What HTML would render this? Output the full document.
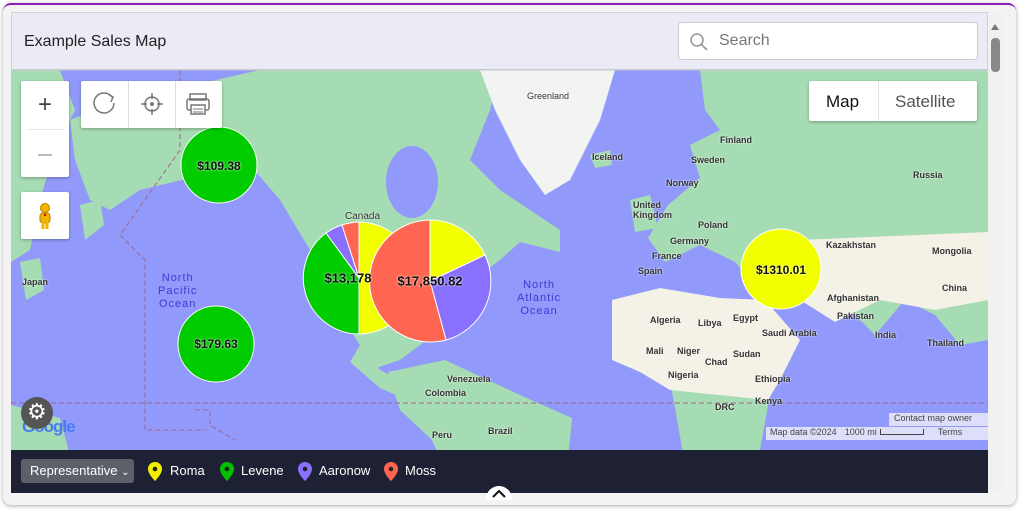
<!DOCTYPE html>
<html><head><meta charset="utf-8"><style>
*{margin:0;padding:0;box-sizing:border-box}
body{width:1024px;height:511px;background:#fff;font-family:"Liberation Sans",Arial,sans-serif;position:relative;overflow:hidden}
.card{position:absolute;left:3px;top:3px;width:1013px;height:502px;border-radius:8px;background:#f3f3f3;box-shadow:0 1px 4px rgba(0,0,0,.35);border-top:2px solid #8a1fb8;overflow:hidden}
.abs{position:absolute}
.header{left:11px;top:12px;width:977px;height:58px;background:#ebebf5;border:1px solid #d0d0d8;border-bottom:1px solid #c8c8d0}
.title{left:12px;top:20px;font-size:16px;color:#222}
.search{left:666px;top:9px;width:300px;height:38px;background:#fff;border:1px solid #ccc;border-radius:4px}
.search span{position:absolute;left:40px;top:9px;font-size:16px;color:#777}
.btn{background:#fff;box-shadow:0 1px 3px rgba(0,0,0,.3);border-radius:2px}
.lbl{position:absolute;font-size:11px;color:#333;font-weight:bold;text-shadow:0 0 2px #fff}
.pv{position:absolute;font-size:12px;font-weight:bold;color:#111;transform:translate(-50%,-50%);text-shadow:0 0 2px #fff}
</style></head><body>
<div class="card"></div>
<svg class="abs" style="left:0;top:0" width="1024" height="511">
<defs><clipPath id="c"><rect x="11" y="70" width="977" height="423"/></clipPath></defs>
<g clip-path="url(#c)">
<rect x="11" y="70" width="977" height="423" fill="#9199fb"/>
<g fill="#a6dcb3">
<polygon points="11,70 60,70 75,110 55,150 40,200 30,250 11,262"/>
<polygon points="20,262 40,258 44,290 26,300"/>
<polygon points="80,205 100,200 104,225 85,240"/>
<polygon points="70,120 120,100 180,88 260,70 500,70 490,110 470,160 500,190 530,210 560,230 560,252 520,242 500,260 480,275 470,300 440,330 420,345 400,360 370,370 360,345 330,300 310,250 280,200 250,165 230,145 190,178 140,190 110,210 90,200 75,160"/>
<polygon points="360,345 380,370 420,390 445,400 425,408 380,388 350,362"/>
<polygon points="700,70 988,70 988,340 960,345 935,315 905,300 875,335 845,305 810,300 790,290 760,290 735,262 700,245 665,262 648,238 668,205 700,178 690,145 720,130 705,110"/>
<polygon points="630,200 650,195 658,228 635,232"/>
<polygon points="590,155 610,150 612,165 595,168"/>
<polygon points="388,372 445,360 520,395 572,418 565,493 455,493 432,440 400,410"/>
<polygon points="11,405 60,418 80,493 11,493"/>
<polygon points="670,380 770,395 760,450 725,493 690,493"/>
</g>
<ellipse cx="412" cy="182" rx="26" ry="36" fill="#9199fb"/>
<polygon points="480,70 615,70 600,120 570,180 545,195 520,160 495,110" fill="#f2f4f2"/>
<g fill="#f4f1e6">
<polygon points="612,300 660,288 720,298 765,300 800,340 780,380 768,400 670,390 640,372 612,360"/>
<polygon points="800,240 988,232 988,300 935,310 880,300 835,322 800,300"/>
</g>
<g stroke="#a0658a" stroke-dasharray="5,3" fill="none" stroke-width="1">
<line x1="11" y1="403" x2="988" y2="403"/>
<polyline points="180,70 180,150 120,235 145,260 145,430 205,430"/>
<polyline points="195,410 210,410 210,425 235,440"/>
</g>
</g>
<line x1="11" y1="70" x2="988" y2="70" stroke="#ccc"/>
<circle cx="219" cy="165" r="38" fill="#00cc00" stroke="#fff"/>
<circle cx="216" cy="344" r="38" fill="#00cc00" stroke="#fff"/>
<circle cx="781" cy="269" r="40" fill="#f2ff00" stroke="#fff"/>
<g stroke="#fff" stroke-width="1">
<path d="M359,278 L359,222 A56,56 0 0 1 359,334 Z" fill="#f2ff00"/>
<path d="M359,278 L359,334 A56,56 0 0 1 326,233 Z" fill="#00cc00"/>
<path d="M359,278 L326,233 A56,56 0 0 1 342,225 Z" fill="#8a70ff"/>
<path d="M359,278 L342,225 A56,56 0 0 1 359,222 Z" fill="#ff6652"/>
<path d="M430,281 L430,220 A61,61 0 0 1 485,255 Z" fill="#f2ff00"/>
<path d="M430,281 L485,255 A61,61 0 0 1 446,340 Z" fill="#8a70ff"/>
<path d="M430,281 L446,340 A61,61 0 1 1 430,220 Z" fill="#ff6652"/>
</g>
<rect x="988" y="12" width="15" height="481" fill="#f1f1f1"/>
<polygon points="991,30 999,30 995,24" fill="#777"/>
<rect x="991" y="38" width="9" height="34" rx="4" fill="#888"/>
</svg>
<div class="pv" style="left:219px;top:166px">$109.38</div>
<div class="pv" style="left:216px;top:344px">$179.63</div>
<div class="pv" style="left:781px;top:270px">$1310.01</div>
<div class="pv" style="left:348px;top:278px;font-size:13px">$13,178</div>
<div class="pv" style="left:430px;top:281px;font-size:13px">$17,850.82</div>
<div class="lbl" style="left:527px;top:91px;font-weight:normal;font-size:9px">Greenland</div>
<div class="lbl" style="left:345px;top:211px;font-weight:normal;font-size:10px">Canada</div>
<div class="lbl" style="left:720px;top:135px;font-size:9px">Finland</div>
<div class="lbl" style="left:592px;top:152px;font-size:9px">Iceland</div>
<div class="lbl" style="left:691px;top:155px;font-size:9px">Sweden</div>
<div class="lbl" style="left:666px;top:178px;font-size:9px">Norway</div>
<div class="lbl" style="left:633px;top:200px;font-size:9px;line-height:10px">United<br>Kingdom</div>
<div class="lbl" style="left:698px;top:220px;font-size:9px">Poland</div>
<div class="lbl" style="left:670px;top:236px;font-size:9px">Germany</div>
<div class="lbl" style="left:652px;top:251px;font-size:9px">France</div>
<div class="lbl" style="left:638px;top:266px;font-size:9px">Spain</div>
<div class="lbl" style="left:913px;top:170px;font-size:9px">Russia</div>
<div class="lbl" style="left:826px;top:240px;font-size:9px">Kazakhstan</div>
<div class="lbl" style="left:932px;top:246px;font-size:9px">Mongolia</div>
<div class="lbl" style="left:942px;top:283px;font-size:9px">China</div>
<div class="lbl" style="left:827px;top:293px;font-size:9px">Afghanistan</div>
<div class="lbl" style="left:837px;top:311px;font-size:9px">Pakistan</div>
<div class="lbl" style="left:927px;top:338px;font-size:9px">Thailand</div>
<div class="lbl" style="left:875px;top:330px;font-size:9px">India</div>
<div class="lbl" style="left:650px;top:315px;font-size:9px">Algeria</div>
<div class="lbl" style="left:698px;top:318px;font-size:9px">Libya</div>
<div class="lbl" style="left:733px;top:313px;font-size:9px">Egypt</div>
<div class="lbl" style="left:762px;top:328px;font-size:9px">Saudi Arabia</div>
<div class="lbl" style="left:646px;top:346px;font-size:9px">Mali</div>
<div class="lbl" style="left:677px;top:346px;font-size:9px">Niger</div>
<div class="lbl" style="left:733px;top:349px;font-size:9px">Sudan</div>
<div class="lbl" style="left:705px;top:357px;font-size:9px">Chad</div>
<div class="lbl" style="left:668px;top:370px;font-size:9px">Nigeria</div>
<div class="lbl" style="left:755px;top:374px;font-size:9px">Ethiopia</div>
<div class="lbl" style="left:715px;top:402px;font-size:9px">DRC</div>
<div class="lbl" style="left:755px;top:396px;font-size:9px">Kenya</div>
<div class="lbl" style="left:447px;top:374px;font-size:9px">Venezuela</div>
<div class="lbl" style="left:425px;top:388px;font-size:9px">Colombia</div>
<div class="lbl" style="left:432px;top:430px;font-size:9px">Peru</div>
<div class="lbl" style="left:488px;top:426px;font-size:9px">Brazil</div>
<div class="lbl" style="left:22px;top:277px;font-size:9px">Japan</div>
<div class="abs" style="left:158px;top:272px;color:#3b3bd0;font-size:11px;text-align:center;letter-spacing:1px;line-height:13px">North<br>Pacific<br>Ocean</div>
<div class="abs" style="left:517px;top:279px;color:#3b3bd0;font-size:11px;text-align:center;letter-spacing:1px;line-height:13px">North<br>Atlantic<br>Ocean</div>
<div class="header abs">
<div class="title abs">Example Sales Map</div>
<div class="search abs"><svg class="abs" style="left:10px;top:9px" width="20" height="20"><circle cx="8" cy="8" r="6" stroke="#999" stroke-width="1.6" fill="none"/><line x1="12.5" y1="12.5" x2="18" y2="18" stroke="#999" stroke-width="1.8"/></svg><span>Search</span></div>
</div>
<div class="btn abs" style="left:21px;top:81px;width:48px;height:96px"><div class="abs" style="left:0;top:0;width:48px;height:48px;text-align:center;line-height:48px;font-size:24px;color:#444">+</div><div class="abs" style="left:6px;top:48px;width:36px;height:1px;background:#e6e6e6"></div><div class="abs" style="left:17px;top:73px;width:14px;height:2px;background:#bbb"></div></div>
<div class="btn abs" style="left:21px;top:192px;width:48px;height:47px"><svg class="abs" style="left:15px;top:10px" width="18" height="28"><circle cx="9" cy="6" r="4.5" fill="#f2b400" stroke="#b58500"/><rect x="4" y="11" width="10" height="10" rx="3" fill="#f2b400" stroke="#b58500"/><rect x="5.5" y="19" width="3" height="8" fill="#f2b400"/><rect x="9.5" y="19" width="3" height="8" fill="#f2b400"/><circle cx="9" cy="13" r="1.2" fill="#d00"/></svg></div>
<div class="btn abs" style="left:81px;top:81px;width:141px;height:47px">
<div class="abs" style="left:47px;top:0;width:1px;height:47px;background:#ddd"></div><div class="abs" style="left:94px;top:0;width:1px;height:47px;background:#ddd"></div>
<svg class="abs" style="left:0;top:0" width="141" height="47"><path d="M31 16 A10 10 0 1 0 33 22" stroke="#777" stroke-width="1.5" fill="none"/><polyline points="27,13 32,16 30,21" stroke="#777" stroke-width="1.5" fill="none"/><circle cx="71" cy="23" r="7" stroke="#777" stroke-width="1.5" fill="none"/><circle cx="71" cy="23" r="2" fill="#777"/><path d="M71 12v6M71 28v6M60 23h6M76 23h6" stroke="#777" stroke-width="1.5"/><rect x="109" y="13" width="16" height="6" stroke="#777" stroke-width="1.5" fill="none"/><rect x="106" y="18" width="22" height="11" rx="2" stroke="#777" stroke-width="1.5" fill="none"/><rect x="110" y="24" width="14" height="9" stroke="#777" stroke-width="1.5" fill="#fff"/><path d="M112 28h10M112 31h10" stroke="#777"/></svg></div>
<div class="btn abs" style="left:809px;top:81px;width:168px;height:40px"><div class="abs" style="left:17px;top:11px;font-size:17px;color:#111">Map</div><div class="abs" style="left:69px;top:0;width:1px;height:40px;background:#e5e5e5"></div><div class="abs" style="left:86px;top:11px;font-size:17px;color:#555">Satellite</div></div>
<div class="abs" style="left:22px;top:417px;font-size:17px;font-weight:bold;color:#4a7af0;letter-spacing:-1px">Google</div>
<div class="abs" style="left:21px;top:397px;width:32px;height:32px;border-radius:50%;background:#555"><div class="abs" style="left:6px;top:2px;font-size:22px;color:#fff">⚙</div></div>
<div class="abs" style="left:889px;top:413px;width:99px;height:13px;background:rgba(240,240,250,.8);font-size:9px;color:#444;padding-left:5px">Contact map owner</div>
<div class="abs" style="left:766px;top:427px;width:222px;height:13px;background:rgba(240,240,250,.8);font-size:9px;color:#444;white-space:nowrap"><span style="margin-left:4px">Map data ©2024</span><span style="margin-left:8px">1000 mi</span><span style="display:inline-block;width:44px;height:6px;border:1.5px solid #444;border-top:none;margin-left:3px"></span><span style="margin-left:14px">Terms</span></div>
<div class="abs" style="left:11px;top:450px;width:977px;height:43px;background:#1e2034"></div>
<div class="abs" style="left:21px;top:459px;width:113px;height:24px;border-radius:3px;background:#5e6069;color:#fff;font-size:13px;line-height:24px;padding-left:9px">Representative <span style="font-size:10px">&#8964;</span></div>
<svg class="abs" style="left:147px;top:460px" width="300" height="24">
<g><path d="M8 2a7 7 0 0 1 7 7c0 5-7 12-7 12S1 14 1 9a7 7 0 0 1 7-7z" fill="#f2ee00"/><circle cx="8" cy="9" r="2.3" fill="#222"/></g>
<g transform="translate(72,0)"><path d="M8 2a7 7 0 0 1 7 7c0 5-7 12-7 12S1 14 1 9a7 7 0 0 1 7-7z" fill="#00c000"/><circle cx="8" cy="9" r="2.3" fill="#222"/></g>
<g transform="translate(150,0)"><path d="M8 2a7 7 0 0 1 7 7c0 5-7 12-7 12S1 14 1 9a7 7 0 0 1 7-7z" fill="#8a70ff"/><circle cx="8" cy="9" r="2.3" fill="#222"/></g>
<g transform="translate(236,0)"><path d="M8 2a7 7 0 0 1 7 7c0 5-7 12-7 12S1 14 1 9a7 7 0 0 1 7-7z" fill="#ff6652"/><circle cx="8" cy="9" r="2.3" fill="#222"/></g>
</svg>
<div class="abs" style="left:170px;top:463px;color:#fff;font-size:13px">Roma</div>
<div class="abs" style="left:241px;top:463px;color:#fff;font-size:13px">Levene</div>
<div class="abs" style="left:319px;top:463px;color:#fff;font-size:13px">Aaronow</div>
<div class="abs" style="left:405px;top:463px;color:#fff;font-size:13px">Moss</div>
<div class="abs" style="left:486px;top:486px;width:26px;height:14px;border-radius:13px 13px 0 0;background:#fff"><svg class="abs" style="left:5px;top:3px" width="16" height="10"><polyline points="2,8 8,2 14,8" stroke="#111" stroke-width="2" fill="none"/></svg></div>
</body></html>
